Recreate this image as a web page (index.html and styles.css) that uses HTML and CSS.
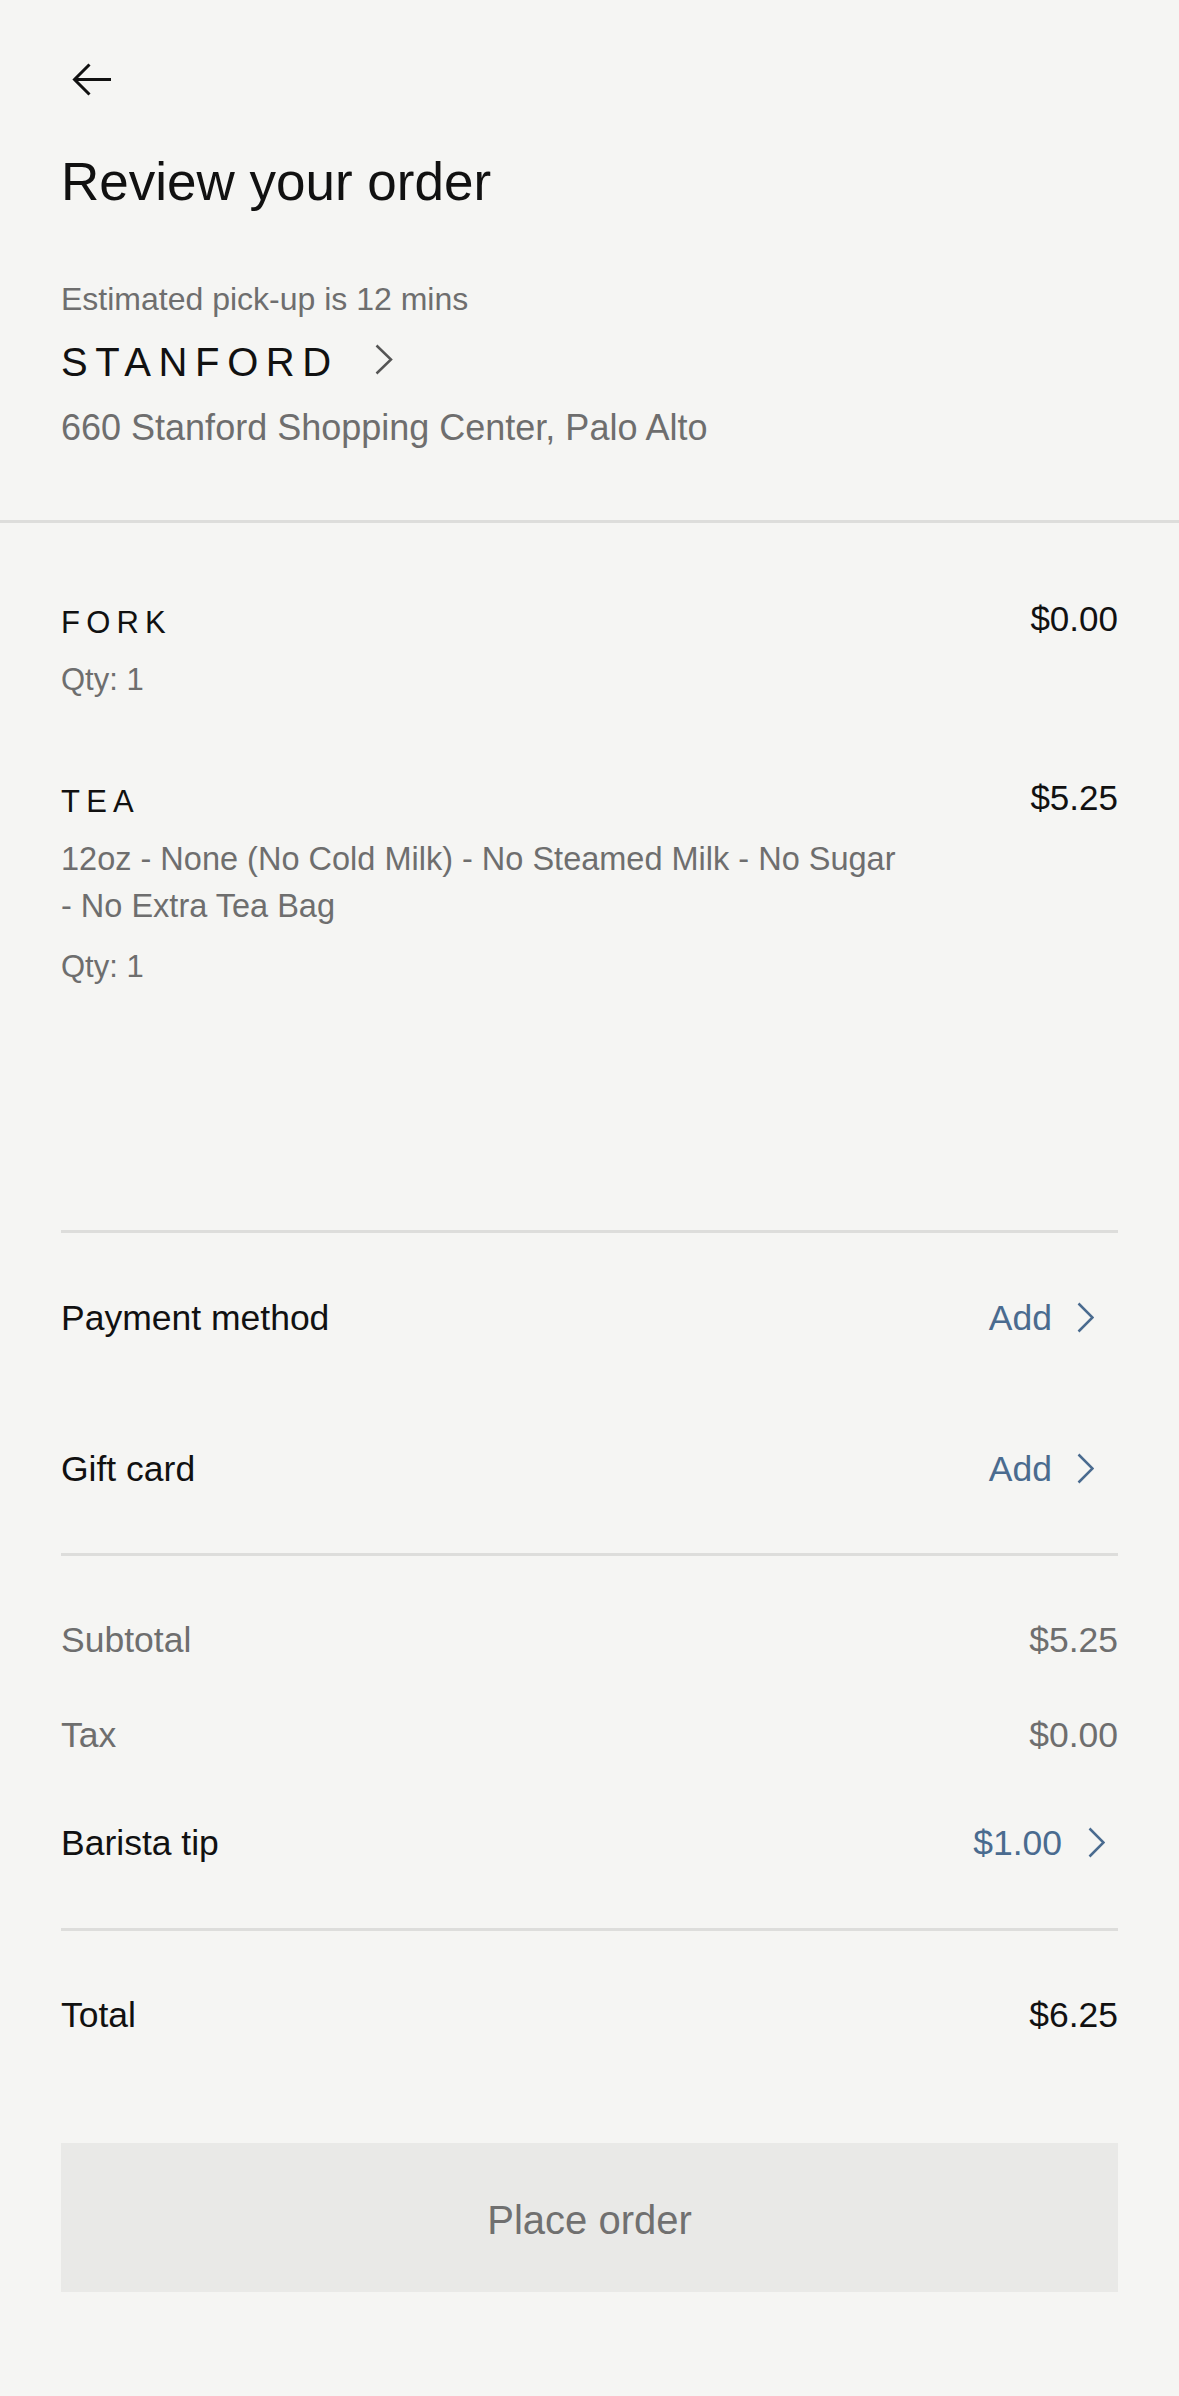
FILE: index.html
```html
<!DOCTYPE html>
<html lang="en">
<head>
  <meta charset="UTF-8">
  <meta name="viewport" content="width=device-width, initial-scale=1.0">
  <title>Review your order</title>
  <link rel="stylesheet" href="styles.css">
</head>
<body>
  <div class="top">
    <a class="back" href="#">
      <svg width="40" height="33" viewBox="0 0 40 33"><path d="M39 16.5 H3 M17.5 1.5 L2.5 16.5 L17.5 31.5" fill="none" stroke="#111" stroke-width="3"/></svg>
    </a>
    <h1>Review your order</h1>

    <p class="eta">Estimated pick-up is 12 mins</p>
    <a class="store" href="#">
      <span>STANFORD</span>
      <svg width="18" height="31" viewBox="0 0 18 31"><path d="M1.5 1.5 L16 15.5 L1.5 29.5" fill="none" stroke="#555" stroke-width="2.5"/></svg>
    </a>
    <p class="address">660 Stanford Shopping Center, Palo Alto</p>
  </div>

  <div class="items">
    <div class="item">
      <div class="item-info">
        <div class="item-name">FORK</div>
        <div class="qty">Qty: 1</div>
      </div>
      <div class="item-price">$0.00</div>
    </div>
    <div class="item">
      <div class="item-info">
        <div class="item-name">TEA</div>
        <div class="options">12oz <span class="nw">- None</span> (No Cold Milk) <span class="nw">- No</span> Steamed Milk <span class="nw">- No</span> Sugar <span class="nw">- No</span> Extra Tea Bag</div>
        <div class="qty">Qty: 1</div>
      </div>
      <div class="item-price">$5.25</div>
    </div>
  </div>

  <div class="section links">
    <div class="row">
      <span>Payment method</span>
      <a class="link" href="#">Add
        <svg width="17" height="31" viewBox="0 0 17 31"><path d="M1.5 1.5 L15.5 15.5 L1.5 29.5" fill="none" stroke="#4a6b8f" stroke-width="2.5"/></svg>
      </a>
    </div>
    <div class="row">
      <span>Gift card</span>
      <a class="link" href="#">Add
        <svg width="17" height="31" viewBox="0 0 17 31"><path d="M1.5 1.5 L15.5 15.5 L1.5 29.5" fill="none" stroke="#4a6b8f" stroke-width="2.5"/></svg>
      </a>
    </div>
  </div>

  <div class="section summary">
    <div class="row muted">
      <span>Subtotal</span>
      <span>$5.25</span>
    </div>
    <div class="row muted">
      <span>Tax</span>
      <span>$0.00</span>
    </div>
    <div class="row tip">
      <span>Barista tip</span>
      <a class="link" href="#">$1.00
        <svg width="17" height="31" viewBox="0 0 17 31"><path d="M1.5 1.5 L15.5 15.5 L1.5 29.5" fill="none" stroke="#4a6b8f" stroke-width="2.5"/></svg>
      </a>
    </div>
  </div>

  <div class="total-box">
    <div class="row">
      <span>Total</span>
      <span>$6.25</span>
    </div>
    <button class="place">Place order</button>
  </div>
</body>
</html>
```

FILE: styles.css
```css
body {
  margin: 0;
  background: #f5f5f3;
  color: #111;
  font-family: "Liberation Sans", Arial, sans-serif;
}
a {
  color: inherit;
  text-decoration: none;
}
p {
  margin: 0;
}
.top {
  padding: 63px 61px 70px;
  border-bottom: 3px solid #dddddb;
}
.back {
  display: block;
  width: 40px;
  margin-left: 11px;
}
.back svg {
  display: block;
}
h1 {
  margin: 56px 0 0;
  font-size: 53px;
  line-height: 60px;
  font-weight: 400;
}
.eta {
  margin-top: 67px;
  font-size: 32px;
  line-height: 40px;
  color: #6e6e6e;
}
.store {
  display: flex;
  align-items: center;
  margin-top: 19px;
  font-size: 40px;
  line-height: 48px;
  letter-spacing: 0.19em;
}
.store svg {
  margin-left: 36px;
  margin-top: -6px;
}
.address {
  margin-top: 20px;
  font-size: 36px;
  line-height: 44px;
  color: #6e6e6e;
}

.items {
  padding: 82px 61px 245px;
}
.item {
  display: flex;
  justify-content: space-between;
  align-items: flex-start;
}
.item + .item {
  margin-top: 86px;
}
.item-name {
  font-size: 31px;
  line-height: 36px;
  letter-spacing: 0.2em;
}
.item-price {
  font-size: 35px;
  line-height: 28px;
}
.qty {
  margin-top: 21px;
  font-size: 31px;
  line-height: 36px;
  color: #6e6e6e;
}
.options {
  max-width: 870px;
  margin-top: 16px;
  font-size: 32.5px;
  line-height: 47px;
  color: #6e6e6e;
}
.nw {
  white-space: nowrap;
}
.options + .qty {
  margin-top: 19px;
}

.section {
  margin: 0 61px;
  border-top: 3px solid #dddddb;
}
.row {
  display: flex;
  justify-content: space-between;
  align-items: center;
  font-size: 35.5px;
  line-height: 44px;
}
.links {
  padding: 9px 0;
}
.links .row {
  height: 151px;
}
.link {
  display: flex;
  align-items: center;
  color: #4a6b8f;
}
.link svg {
  margin-left: 25px;
  margin-right: 24px;
}
.summary {
  padding: 36px 0 38px;
}
.summary .row {
  height: 95px;
}
.summary .tip {
  margin-top: 13px;
}
.tip .link svg {
  margin-left: 26px;
  margin-right: 13px;
}
.muted {
  color: #6e6e6e;
}
.total-box {
  margin: 0 61px;
  padding-top: 36px;
  border-top: 3px solid #dddddb;
}
.total-box .row {
  height: 95px;
}
.place {
  display: block;
  width: 100%;
  height: 149px;
  margin-top: 81px;
  padding-top: 6px;
  border: none;
  background: #e9e9e7;
  color: #707070;
  font-family: inherit;
  font-size: 40px;
  cursor: pointer;
}
```
